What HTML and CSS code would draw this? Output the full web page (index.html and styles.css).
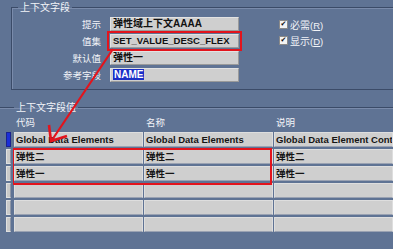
FILE: index.html
```html
<!DOCTYPE html>
<html lang="zh-CN">
<head>
    <meta charset="UTF-8">
    <title>上下文字段</title>
    <link rel="stylesheet" href="styles.css">
</head>
<body>
    <fieldset class="group group-top">
        <legend>上下文字段</legend>
        <div class="top-row">
            <div class="fields">
                <label>提示</label>
                <div class="field">弹性域上下文AAAA</div>
                <label>值集</label>
                <div class="field marked">SET_VALUE_DESC_FLEX</div>
                <label>默认值</label>
                <div class="field">弹性一</div>
                <label>参考字段</label>
                <div class="field"><span class="selected">NAME</span></div>
            </div>
            <div class="checks">
                <div class="check"><span class="box">&#10004;</span>必需<span class="key">(<u>R</u>)</span></div>
                <div class="check"><span class="box">&#10004;</span>显示 <span class="key">(<u>D</u>)</span></div>
            </div>
        </div>
    </fieldset>

    <fieldset class="group group-values">
        <legend>上下文字段值</legend>
        <div class="row head">
            <span class="sel"></span>
            <span class="cell c1">代码</span>
            <span class="cell c2">名称</span>
            <span class="cell c3">说明</span>
        </div>
        <div class="row">
            <span class="sel current"></span>
            <span class="cell c1">Global Data Elements</span>
            <span class="cell c2">Global Data Elements</span>
            <span class="cell c3">Global Data Element Context</span>
        </div>
        <div class="row">
            <span class="sel"></span>
            <span class="cell c1">弹性二</span>
            <span class="cell c2">弹性二</span>
            <span class="cell c3">弹性二</span>
        </div>
        <div class="row">
            <span class="sel"></span>
            <span class="cell c1">弹性一</span>
            <span class="cell c2">弹性一</span>
            <span class="cell c3">弹性一</span>
        </div>
        <div class="row">
            <span class="sel"></span>
            <span class="cell c1"></span>
            <span class="cell c2"></span>
            <span class="cell c3"></span>
        </div>
        <div class="row">
            <span class="sel"></span>
            <span class="cell c1"></span>
            <span class="cell c2"></span>
            <span class="cell c3"></span>
        </div>
        <div class="row">
            <span class="sel"></span>
            <span class="cell c1"></span>
            <span class="cell c2"></span>
            <span class="cell c3"></span>
        </div>
    </fieldset>

    <!-- annotation drawn over the form -->
    <div class="mark-rows"></div>
    <svg class="arrow" width="393" height="249" viewBox="0 0 393 249">
        <path d="M113 49 L52 140" stroke="#e3141c" stroke-width="2.2" fill="none"/>
        <path d="M49 125 L51 141 L67 136" stroke="#e3141c" stroke-width="2.6" fill="none" stroke-linejoin="miter"/>
    </svg>
</body>
</html>
```

FILE: styles.css
```css
body {
    margin: 0;
    width: 393px;
    height: 249px;
    overflow: hidden;
    position: relative;
    background-color: #5f7394;
    font-family: "Liberation Sans", "Noto Sans CJK SC", sans-serif;
    font-size: 9.5px;
    color: #f2f4f8;
}
.group {
    border: 1px solid #3b4b68;
    box-shadow: inset 1px 1px 0 #7a8bab;
    padding: 0;
    min-width: 0;
}
.group legend {
    padding: 0 2px;
    line-height: 12px;
    font-size: 10px;
    font-family: "Noto Sans CJK SC", sans-serif;
}
.group-top {
    margin: 1px 0 0 11px;
    border-right: none;
    padding: 4px 0 7px 0;
}
.group-top legend {
    margin-left: 6px;
}
.top-row {
    display: flex;
}
.fields {
    display: grid;
    grid-template-columns: 89px 129px;
    grid-auto-rows: 14px;
    column-gap: 9px;
    row-gap: 3px;
}
.fields label {
    text-align: right;
    line-height: 14px;
    font-family: "Noto Sans CJK SC", sans-serif;
    font-size: 9.5px;
}
.field {
    height: 14px;
    box-sizing: border-box;
    background-color: #cfcfcf;
    border: 1px solid #e2e2e2;
    border-right-color: #9a9a9a;
    border-bottom-color: #9a9a9a;
    color: #111;
    font-weight: bold;
    font-size: 10px;
    line-height: 12px;
    padding-left: 2px;
    white-space: nowrap;
    overflow: hidden;
}
.field.marked {
    font-size: 9.5px;
    outline: 2px solid #e3141c;
    outline-offset: 1px;
}
.selected {
    background-color: #1b2fc8;
    color: #fff;
    padding: 0 1px;
}
.checks {
    margin-left: 40px;
    padding-top: 1px;
    display: flex;
    flex-direction: column;
    gap: 4px;
}
.check {
    display: flex;
    align-items: center;
    height: 12px;
    font-family: "Noto Sans CJK SC", sans-serif;
    font-size: 10px;
}
.box {
    width: 7px;
    height: 7px;
    background-color: #f4f4f4;
    border: 1px solid #8a8a8a;
    color: #111;
    font-size: 7px;
    line-height: 7px;
    text-align: center;
    margin-right: 2px;
    font-family: "DejaVu Sans", sans-serif;
}
.key {
    font-family: "Liberation Sans", sans-serif;
    font-size: 9.5px;
    margin-top: 3px;
}
.group-values {
    margin: 11px 0 0 0;
    border-left: none;
    border-right: none;
    border-bottom: none;
    box-shadow: inset 0 1px 0 #7a8bab;
    padding: 2px 0 0 6px;
}
.group-values legend {
    margin-left: 8px;
}
.row {
    display: flex;
    gap: 1px;
    height: 15px;
    margin-bottom: 2px;
}
.row.head {
    height: 14px;
    margin-bottom: 3px;
}
.sel {
    width: 5px;
    margin-right: 2px;
    box-sizing: border-box;
    background-color: #c9c9c9;
    border: 1px solid #e0e0e0;
    border-right-color: #8e96a6;
}
.sel.current {
    background-color: #1b2fd8;
    border-color: #1a2290;
}
.cell {
    box-sizing: border-box;
    background-color: #cfcfcf;
    border: 1px solid #dedede;
    border-bottom-color: #9aa2b2;
    color: #151515;
    font-weight: bold;
    font-size: 9.5px;
    line-height: 13px;
    padding-left: 1px;
    white-space: nowrap;
    overflow: hidden;
}
.c1 {
    width: 129px;
}
.c2 {
    width: 129px;
}
.c3 {
    flex: 1;
}
.head .sel,
.head .cell {
    background: none;
    border: none;
    color: #f2f4f8;
    font-weight: normal;
    font-family: "Noto Sans CJK SC", sans-serif;
    font-size: 9.5px;
    line-height: 14px;
}
.head .cell {
    padding-left: 2px;
}
.mark-rows {
    position: absolute;
    left: 13px;
    top: 148px;
    width: 256px;
    height: 33px;
    border: 2px solid #e3141c;
    border-left-width: 1px;
}
.arrow {
    position: absolute;
    left: 0;
    top: 0;
}
```
